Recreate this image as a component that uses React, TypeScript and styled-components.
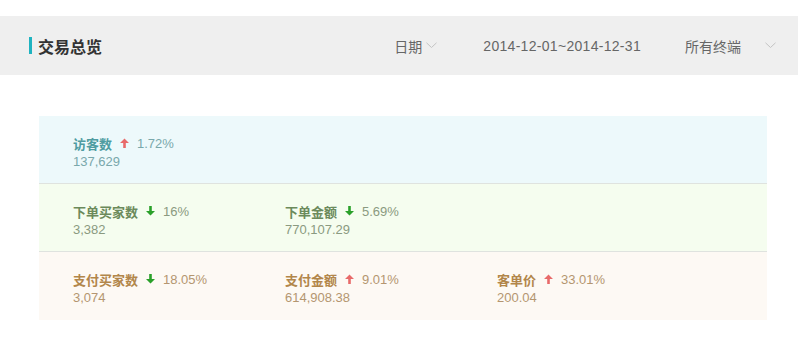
import styled, { createGlobalStyle } from "styled-components";

const GlobalStyle = createGlobalStyle`
  body {
    margin: 0;
    background: #fff;
    font-family: "Liberation Sans", "Noto Sans CJK SC", sans-serif;
  }
`;

type Tone = "blue" | "green" | "orange";

const tones: Record<Tone, { bg: string; label: string; value: string }> = {
  blue: { bg: "#edf9fb", label: "#4f9ca1", value: "#79a8ab" },
  green: { bg: "#f5fdef", label: "#6b8a5b", value: "#8a9a80" },
  orange: { bg: "#fdf9f4", label: "#b2864a", value: "#b49670" },
};

const Header = styled.div`
  margin-top: 16px;
  height: 59px;
  background: #efefef;
  display: flex;
  align-items: center;
  padding-left: 29px;
  padding-right: 22px;
`;

const Title = styled.h2`
  margin: 0;
  flex: 1;
  display: flex;
  align-items: center;
  gap: 6px;
  font-size: 16px;
  font-weight: bold;
  color: #333;
  font-family: "Noto Sans CJK SC", sans-serif;

  &::before {
    content: "";
    width: 3px;
    height: 17px;
    background: #1fb3c0;
  }
`;

const Filter = styled.div<{ $gap?: number }>`
  display: flex;
  align-items: center;
  gap: ${(p) => p.$gap ?? 4}px;
  font-size: 14px;
  color: #666;
`;

const Cn = styled.span`
  font-family: "Noto Sans CJK SC", sans-serif;
`;

const DateText = styled.span`
  margin: 0 44px 0 46px;
  font-size: 14px;
  letter-spacing: 0.3px;
  color: #666;
`;

const Panel = styled.div`
  margin: 41px 31px 0 39px;
`;

const Row = styled.div<{ $tone: Tone }>`
  display: flex;
  height: 67px;
  background: ${(p) => tones[p.$tone].bg};
  border-bottom: 1px solid #dfe3df;
  padding-left: 34px;

  &:last-child {
    border-bottom: none;
    height: 68px;
  }
`;

const Cell = styled.div`
  width: 212px;
  padding-top: 18px;
`;

const Label = styled.div<{ $tone: Tone }>`
  display: flex;
  align-items: center;
  height: 18px;
  font-size: 13px;
  color: ${(p) => tones[p.$tone].value};

  b {
    font-family: "Noto Sans CJK SC", sans-serif;
    font-weight: bold;
    color: ${(p) => tones[p.$tone].label};
    margin-right: 8px;
  }

  svg {
    margin-right: 8px;
  }
`;

const Value = styled.div<{ $tone: Tone }>`
  font-size: 13px;
  line-height: 19px;
  color: ${(p) => tones[p.$tone].value};
`;

const Chevron = () => (
  <svg width="11" height="7" viewBox="0 0 11 7">
    <path d="M0.5 0.8 L5.5 5.5 L10.5 0.8" fill="none" stroke="#c4c4c4" strokeWidth="1" />
  </svg>
);

const Arrow = ({ up }: { up: boolean }) => (
  <svg width="9" height="10" viewBox="0 0 9 10">
    {up ? (
      <path d="M4.5 0.5 L9 5 L5.8 5 L5.8 10 L3.2 10 L3.2 5 L0 5 Z" fill="#e86a6a" />
    ) : (
      <path d="M4.5 9.5 L9 5 L5.8 5 L5.8 0 L3.2 0 L3.2 5 L0 5 Z" fill="#2aa02a" />
    )}
  </svg>
);

interface Metric {
  name: string;
  up: boolean;
  rate: string;
  value: string;
}

const rows: { tone: Tone; items: Metric[] }[] = [
  { tone: "blue", items: [{ name: "访客数", up: true, rate: "1.72%", value: "137,629" }] },
  {
    tone: "green",
    items: [
      { name: "下单买家数", up: false, rate: "16%", value: "3,382" },
      { name: "下单金额", up: false, rate: "5.69%", value: "770,107.29" },
    ],
  },
  {
    tone: "orange",
    items: [
      { name: "支付买家数", up: false, rate: "18.05%", value: "3,074" },
      { name: "支付金额", up: true, rate: "9.01%", value: "614,908.38" },
      { name: "客单价", up: true, rate: "33.01%", value: "200.04" },
    ],
  },
];

export default function App() {
  return (
    <>
      <GlobalStyle />
      <Header>
        <Title>交易总览</Title>
        <Filter>
          <Cn>日期</Cn>
          <Chevron />
        </Filter>
        <DateText>2014-12-01~2014-12-31</DateText>
        <Filter $gap={24}>
          <Cn>所有终端</Cn>
          <Chevron />
        </Filter>
      </Header>
      <Panel>
        {rows.map((r) => (
          <Row key={r.tone} $tone={r.tone}>
            {r.items.map((m) => (
              <Cell key={m.name}>
                <Label $tone={r.tone}>
                  <b>{m.name}</b>
                  <Arrow up={m.up} />
                  {m.rate}
                </Label>
                <Value $tone={r.tone}>{m.value}</Value>
              </Cell>
            ))}
          </Row>
        ))}
      </Panel>
    </>
  );
}
